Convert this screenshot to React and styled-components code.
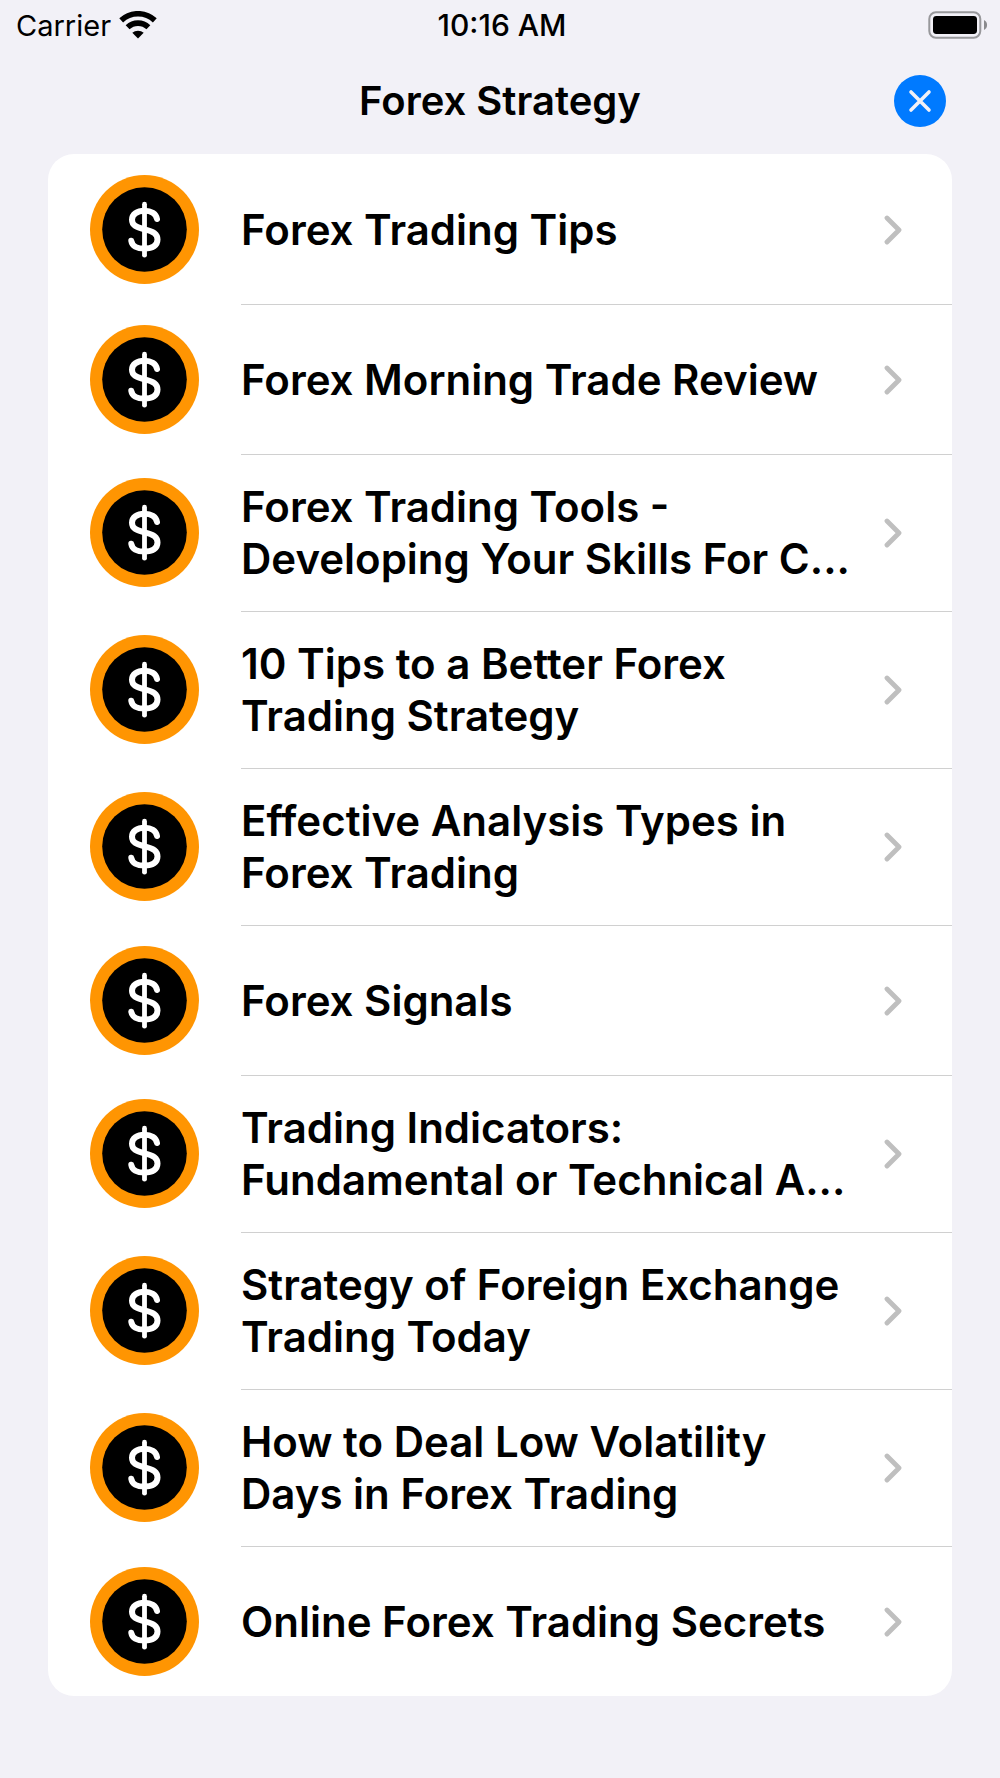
import React from "react";
import styled, { createGlobalStyle } from "styled-components";

const articles = [
  "Forex Trading Tips",
  "Forex Morning Trade Review",
  "Forex Trading Tools - Developing Your Skills For C...",
  "10 Tips to a Better Forex Trading Strategy",
  "Effective Analysis Types in Forex Trading",
  "Forex Signals",
  "Trading Indicators: Fundamental or Technical A...",
  "Strategy of Foreign Exchange Trading Today",
  "How to Deal Low Volatility Days in Forex Trading",
  "Online Forex Trading Secrets",
];

const WifiIcon = () => (
  <svg width="38" height="28" viewBox="0 0 38 28" fill="none" aria-hidden="true">
    <path d="M2.2 9.4 A24.5 24.5 0 0 1 35.8 9.4" stroke="#000" strokeWidth="5.6" />
    <path d="M8.6 16.2 A15.2 15.2 0 0 1 29.4 16.2" stroke="#000" strokeWidth="5.6" />
    <path d="M13.3 21.8 A8.6 8.6 0 0 1 24.7 21.8 L19 27.4 Z" fill="#000" />
  </svg>
);

const BatteryIcon = () => (
  <svg width="60" height="28" viewBox="0 0 60 28" fill="none" aria-hidden="true">
    <rect x="1.3" y="1.3" width="51" height="25.4" rx="6.6" stroke="#98989b" strokeWidth="2" />
    <rect x="5" y="5" width="44" height="18" rx="3.4" fill="#000" />
    <path d="M56 9 A5.6 5.6 0 0 1 56 19 Z" fill="#8a8a8d" />
  </svg>
);

const CloseIcon = () => (
  <svg width="24" height="24" viewBox="0 0 24 24" aria-hidden="true">
    <path d="M3 3 L21 21 M21 3 L3 21" stroke="#f2f1f7" strokeWidth="3.6" strokeLinecap="round" />
  </svg>
);

const CoinIcon = () => (
  <svg width="109" height="109" viewBox="0 0 109 109" fill="none" aria-hidden="true">
    <circle cx="54.5" cy="54.5" r="54.5" fill="#ff9502" />
    <circle cx="54.5" cy="54.5" r="42.3" fill="#000" />
    <path d="M54.5 29.2 V80.2" stroke="#fff" strokeWidth="4.8" strokeLinecap="round" />
    <path
      d="M67 44 C66 38.5 61 35.7 54.5 35.7 C47 35.7 42 39.4 42 44.8 C42 50.2 46 52.3 54.5 54.3 C63.5 56.4 67.5 58.8 67.5 64.6 C67.5 70.6 62.6 73.6 54.5 73.6 C47 73.6 42 70.8 41.3 65.8"
      stroke="#fff"
      strokeWidth="6"
      strokeLinecap="round"
    />
  </svg>
);

const ChevronIcon = () => (
  <svg width="18" height="30" viewBox="0 0 18 30" fill="none" aria-hidden="true">
    <path d="M3 3 L15 15 L3 27" stroke="#bfbfbf" strokeWidth="4.8" strokeLinecap="round" strokeLinejoin="round" />
  </svg>
);

const App = () => {
  return (
    <Screen>
      <GlobalStyle />
      <StatusBar>
        <Carrier>
          Carrier <WifiIcon />
        </Carrier>
        <Time>10:16 AM</Time>
        <Battery>
          <BatteryIcon />
        </Battery>
      </StatusBar>
      <Header>
        <Title>Forex Strategy</Title>
        <CloseButton type="button" aria-label="Close">
          <CloseIcon />
        </CloseButton>
      </Header>
      <List>
        {articles.map((title) => (
          <li key={title}>
            <Row href="#">
              <CoinIcon />
              <RowBody>
                <RowTitle>{title}</RowTitle>
                <ChevronIcon />
              </RowBody>
            </Row>
          </li>
        ))}
      </List>
    </Screen>
  );
};

export default App;

const GlobalStyle = createGlobalStyle`
  * {
    box-sizing: border-box;
  }

  body {
    margin: 0;
    background: #f2f1f7;
    color: #000;
    font-family: Inter, "Liberation Sans", sans-serif;
  }

  svg {
    display: block;
    flex-shrink: 0;
  }
`;

const Screen = styled.div`
  min-height: 100vh;
  padding-bottom: 48px;
`;

const StatusBar = styled.div`
  display: grid;
  grid-template-columns: 1fr auto 1fr;
  align-items: center;
  height: 50px;
  padding: 0 12px 0 16px;
  font-size: 29px;
`;

const Carrier = styled.div`
  display: flex;
  align-items: center;
  gap: 8px;
`;

const Time = styled.time`
  font-size: 30px;
  font-weight: 500;
`;

const Battery = styled.div`
  justify-self: end;
`;

const Header = styled.header`
  display: grid;
  grid-template-columns: 1fr auto 1fr;
  align-items: center;
  padding: 25px 54px 27px;
`;

const Title = styled.h1`
  grid-column: 2;
  margin: 0;
  font-size: 40px;
  font-weight: 600;
  line-height: 52px;
`;

const CloseButton = styled.button`
  display: flex;
  align-items: center;
  justify-content: center;
  justify-self: end;
  width: 52px;
  height: 52px;
  padding: 0;
  border: none;
  border-radius: 50%;
  background: #007aff;
`;

const List = styled.ul`
  margin: 0 48px;
  padding: 0;
  list-style: none;
  border-radius: 26px;
  background: #fff;
  overflow: hidden;
`;

const Row = styled.a`
  display: flex;
  align-items: center;
  gap: 42px;
  padding-left: 42px;
  color: inherit;
  text-decoration: none;
`;

const RowBody = styled.div`
  display: flex;
  align-items: center;
  justify-content: space-between;
  gap: 24px;
  flex: 1;
  min-width: 0;
  min-height: 150px;
  padding: 26px 50px 26px 0;
  border-top: 1px solid #d0d0d0;

  li:first-child & {
    border-top-color: transparent;
  }
`;

const RowTitle = styled.span`
  font-size: 42px;
  font-weight: 600;
  line-height: 52px;
`;
